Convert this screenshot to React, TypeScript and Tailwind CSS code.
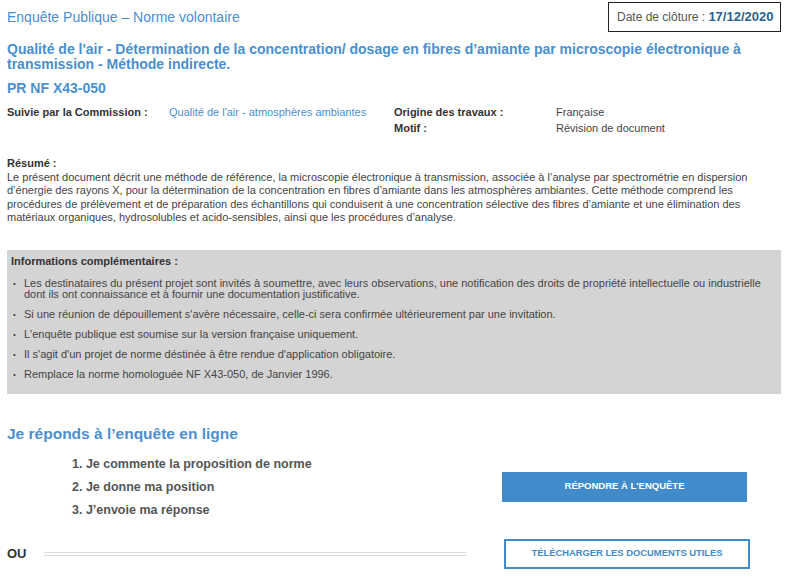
import React from "react";

/* ------------------------------------------------------------------ */
/* Data                                                               */
/* ------------------------------------------------------------------ */

const infos = [
  "Les destinataires du présent projet sont invités à soumettre, avec leurs observations, une notification des droits de propriété intellectuelle ou industrielle dont ils ont connaissance et à fournir une documentation justificative.",
  "Si une réunion de dépouillement s'avère nécessaire, celle-ci sera confirmée ultérieurement par une invitation.",
  "L'enquête publique est soumise sur la version française uniquement.",
  "Il s'agit d'un projet de norme déstinée à être rendue d'application obligatoire.",
  "Remplace la norme homologuée NF X43-050, de Janvier 1996.",
];

const steps = [
  "1. Je commente la proposition de norme",
  "2. Je donne ma position",
  "3. J’envoie ma réponse",
];

/* ------------------------------------------------------------------ */
/* Main component                                                     */
/* ------------------------------------------------------------------ */

export default function App() {
  return (
    <div className="w-[800px] h-[584px] overflow-hidden bg-white font-['Liberation_Sans',Arial,sans-serif] text-[#333]">
      <div className="pl-[7px] pr-[19px]">
        {/* ---------------------------- header ---------------------------- */}
        <div className="flex items-start justify-between pt-[2px]">
          <div className="pt-[5px] text-[14px] text-[#4a8fd0]">
            Enquête Publique – Norme volontaire
          </div>
          <div className="flex h-[30px] w-[173px] items-center border border-[#222] pl-[8px] text-[12px] text-[#555]">
            Date de clôture :&nbsp;
            <span className="text-[13px] font-bold text-[#2b5f8e]">17/12/2020</span>
          </div>
        </div>

        {/* ---------------------------- title ----------------------------- */}
        <h1 className="mt-[10px] text-[14px] font-bold leading-[15px] text-[#4a8fd0]">
          Qualité de l'air - Détermination de la concentration/ dosage en fibres d’amiante par microscopie électronique à transmission - Méthode indirecte.
        </h1>
        <h2 className="mt-[8px] text-[14px] font-bold leading-[16px] text-[#4a8fd0]">
          PR NF X43-050
        </h2>

        {/* ------------------------- meta fields -------------------------- */}
        <div className="mt-[8px] flex text-[11px] leading-[16px]">
          <div className="w-[162px] font-bold text-[#333]">Suivie par la Commission :</div>
          <div className="w-[225px] text-[#4a8fd0]">Qualité de l'air - atmosphères ambiantes</div>
          <div className="grid grid-cols-[162px_1fr]">
            <div className="font-bold">Origine des travaux :</div>
            <div className="text-[#444]">Française</div>
            <div className="font-bold">Motif :</div>
            <div className="text-[#444]">Révision de document</div>
          </div>
        </div>

        {/* ---------------------------- résumé ---------------------------- */}
        <div className="mt-[21px] text-[11px] leading-[13.5px]">
          <div className="font-bold">Résumé :</div>
          <p className="text-[#444]">
            Le présent document décrit une méthode de référence, la microscopie électronique à transmission, associée à l’analyse par spectrométrie en dispersion d’énergie des rayons X, pour la détermination de la concentration en fibres d’amiante dans les atmosphères ambiantes. Cette méthode comprend les procédures de prélèvement et de préparation des échantillons qui conduisent à une concentration sélective des fibres d’amiante et une élimination des matériaux organiques, hydrosolubles et acido-sensibles, ainsi que les procédures d’analyse.
          </p>
        </div>

        {/* -------------------- informations complémentaires -------------- */}
        <div className="mt-[25px] h-[144px] bg-[#d4d4d4] pl-[4px] pt-[6px] pr-[10px] text-[11px] leading-[11px]">
          <div className="font-bold text-[#333]">Informations complémentaires :</div>
          <ul className="mt-[11px] flex flex-col gap-[9px] text-[#444]">
            {infos.map((t) => (
              <li key={t} className="flex">
                <span className="w-[13px] shrink-0 pl-[2px] text-[8px] leading-[11px]">•</span>
                <span>{t}</span>
              </li>
            ))}
          </ul>
        </div>

        {/* ------------------------- répondre ----------------------------- */}
        <h3 className="mt-[31px] text-[15.5px] font-bold leading-[18px] text-[#4a8fd0]">
          Je réponds à l’enquête en ligne
        </h3>
        <div className="mt-[13px] flex">
          <ol className="ml-[65px] flex w-[430px] flex-col gap-[7px] text-[12.5px] font-bold leading-[16px] text-[#555]">
            {steps.map((s) => (
              <li key={s}>{s}</li>
            ))}
          </ol>
          <div className="pt-[16px]">
            <button className="h-[30px] w-[245px] bg-[#428bca] text-[9.5px] font-bold text-white">
              RÉPONDRE À L'ENQUÊTE
            </button>
          </div>
        </div>

        {/* ------------------------------ ou ------------------------------ */}
        <div className="mt-[21px] flex items-center">
          <span className="w-[37px] text-[13px] font-bold text-[#333]">OU</span>
          <div className="flex w-[422px] flex-col gap-[2px]">
            <div className="h-px bg-[#ddd]" />
            <div className="h-px bg-[#ddd]" />
          </div>
          <button className="ml-[38px] h-[30px] w-[246px] border-2 border-[#428bca] bg-white text-[9.4px] font-bold text-[#428bca]">
            TÉLÉCHARGER LES DOCUMENTS UTILES
          </button>
        </div>
      </div>
    </div>
  );
}
